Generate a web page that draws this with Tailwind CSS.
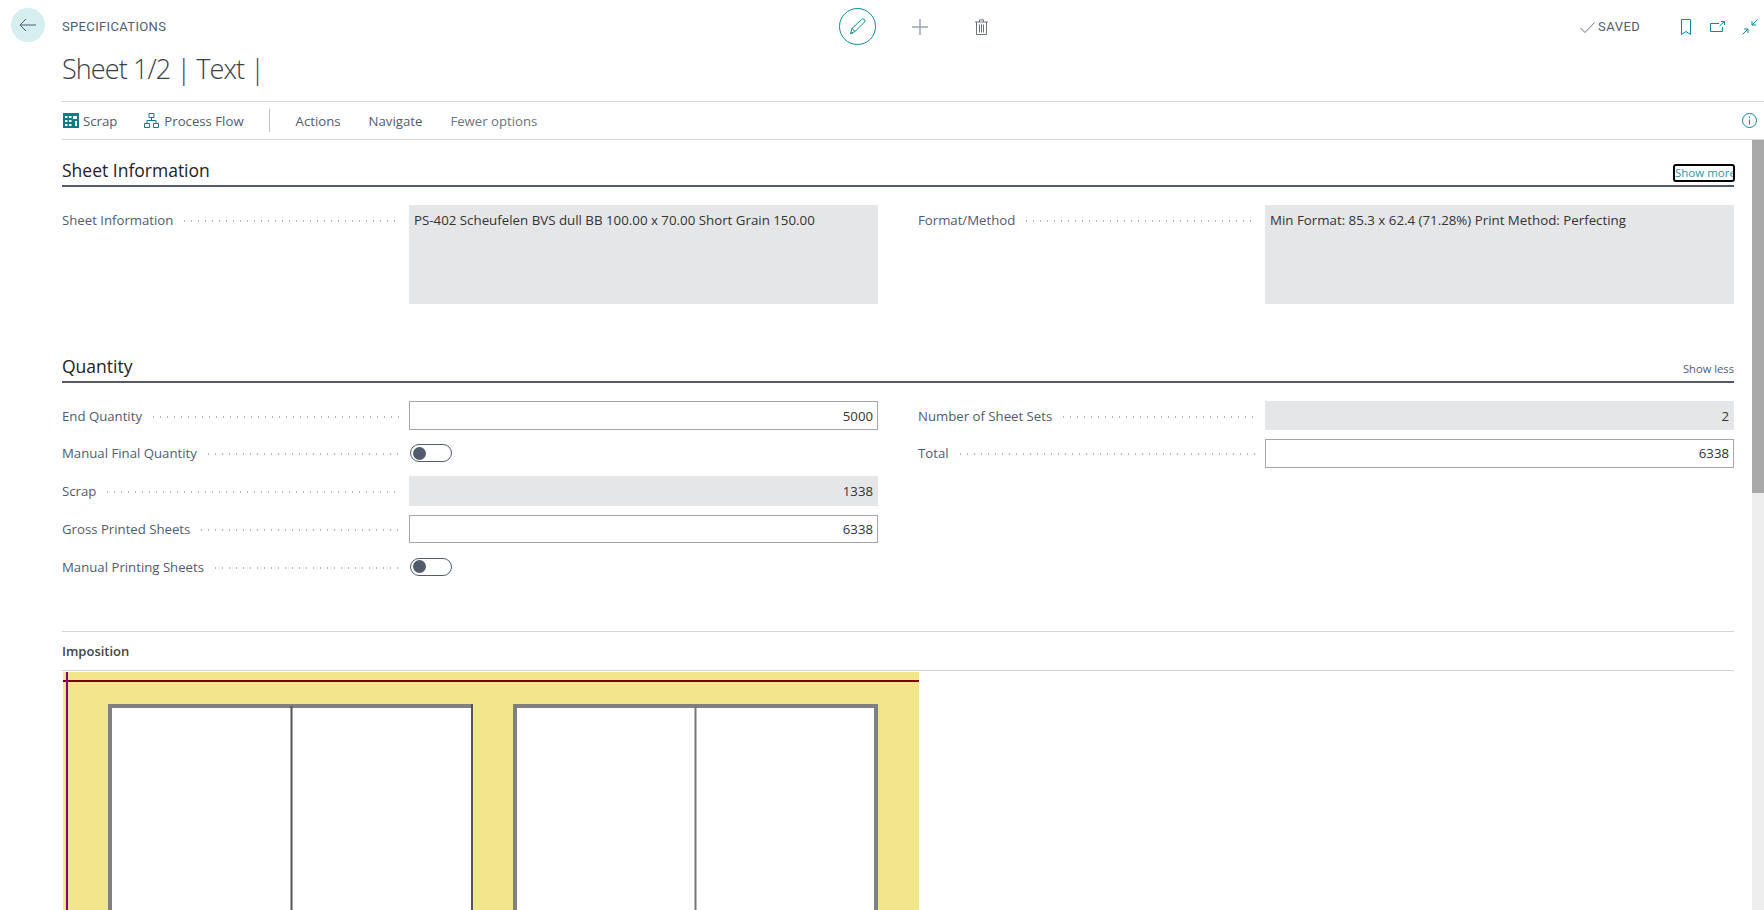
<!DOCTYPE html>
<html lang="en">
<head>
  <meta charset="UTF-8">
  <meta name="viewport" content="width=device-width, initial-scale=1.0">
  <script src="https://cdn.jsdelivr.net/npm/@tailwindcss/browser@4"></script>
  <title>Specifications</title>
</head>
<body class="relative h-[910px] overflow-hidden bg-white font-['Open_Sans',sans-serif] text-[13.2px] text-[#505c6d]">

  <!-- Header -->
  <header class="h-[101px]">
    <div class="flex h-[53px] items-start pt-2">
      <button class="ml-[11px] flex h-[34px] w-[34px] items-center justify-center rounded-full bg-[#d5eef0]">
        <svg width="18" height="14" viewBox="0 0 18 14" fill="none" stroke="#505c6d"><path d="M17 7H1M7 1 1 7l6 6"/></svg>
      </button>
      <div class="ml-[17px] w-[777px] pt-[11px] font-['Roboto',sans-serif] text-[13px] leading-4 tracking-[0.35px]">SPECIFICATIONS</div>
      <button class="flex h-[37px] w-[37px] items-center justify-center rounded-full border border-[#0a8a94]">
        <svg width="17" height="17" viewBox="0 0 17 17" fill="none" stroke="#0a8a94"><path d="M1.5 15.5 3 10.5 12.5 1.5a1.6 1.6 0 0 1 3 2.5L6 13.5zM3 10.5 6 13.5M1.5 15.5 4 15"/></svg>
      </button>
      <svg class="ml-[36px] mt-[11px]" width="16" height="16" viewBox="0 0 16 16" stroke="#9ca3af" stroke-width="1.5"><path d="M8 0v16M0 8h16"/></svg>
      <svg class="ml-[47px] mt-[11px]" width="13" height="16" viewBox="0 0 13 16" fill="none" stroke="#6b7280"><path d="M0 3h13M4.5 3V.8h4V3M1.5 3v12.5h10V3M4.5 5.5v8M6.5 5.5v8M8.5 5.5v8"/></svg>
      <div class="ml-[592px] mt-[11px] flex items-center">
        <svg width="15" height="11" viewBox="0 0 15 11" fill="none" stroke="#6b7280"><path d="M.5 6 5 10.5 14.5.5"/></svg>
        <span class="ml-[3px] font-['Roboto',sans-serif] text-[13px] leading-4 tracking-[0.5px]">SAVED</span>
      </div>
      <svg class="ml-[41px] mt-[11px]" width="10" height="16" viewBox="0 0 10 16" fill="none" stroke="#0a8a94"><path d="M.5.5h9v15L5 12.5.5 15.5z"/></svg>
      <svg class="ml-[19px] mt-[13px]" width="15" height="11" viewBox="0 0 15 11" fill="none" stroke="#0a8a94"><path d="M9 2.5H.5v8h12V6M9.5 5 14.5.5M11 .5h3.5V4"/></svg>
      <svg class="ml-[17px] mt-[11px]" width="16" height="16" viewBox="0 0 16 16" fill="none" stroke="#0a8a94"><path d="M15.5.5 10 6M10 2v4h4M.5 15.5 6 10M2 10h4v4"/></svg>
    </div>
    <h1 class="ml-[62px] pt-[1px] font-['Open_Sans',sans-serif] text-[27px] leading-[30px] font-light tracking-[-0.9px] text-[#3a3f47]">Sheet 1/2 | Text |</h1>
  </header>

  <!-- Action bar -->
  <nav class="ml-[62px] flex h-[39px] items-center border-y border-[#d4d4d4] pt-[2px]">
    <svg class="ml-[1px] -mt-[2px]" width="16" height="15" viewBox="0 0 16 15">
      <rect width="16" height="15" fill="#0a7d87"/>
      <g fill="#fff"><rect x="2" y="3" width="2.5" height="2"/><rect x="6" y="3" width="2.5" height="2"/><rect x="2" y="7" width="2.5" height="2"/><rect x="6" y="7" width="2.5" height="2"/><rect x="2" y="11" width="2.5" height="2"/><rect x="6" y="11" width="2.5" height="2"/><rect x="10" y="3" width="4" height="3"/><rect x="12" y="8" width="2" height="5"/></g>
    </svg>
    <span class="ml-[4px]">Scrap</span>
    <svg class="ml-[27px] -mt-[2px]" width="15" height="15" viewBox="0 0 15 15" fill="none" stroke="#0a7d87"><path d="M5 .5h5v4H5zM.5 10.5h5v4h-5zM9.5 10.5h5v4h-5zM7.5 4.5v3M3 10.5v-3h9v3"/></svg>
    <span class="ml-[5px]">Process Flow</span>
    <div class="ml-[25px] -mt-[2px] h-[23px] w-px bg-[#b8bec6]"></div>
    <span class="ml-[26px]">Actions</span>
    <span class="ml-[28px]">Navigate</span>
    <span class="ml-[28px] text-[#6b7280]">Fewer options</span>
    <svg class="ml-auto mr-[7px] -mt-[2px]" width="15" height="15" viewBox="0 0 15 15" fill="none" stroke="#0a8a94"><circle cx="7.5" cy="7.5" r="7"/><path d="M7.5 6.5v5M7.5 3.5v1.5"/></svg>
  </nav>

  <main class="pl-[62px] pr-[30px]">
    <!-- Sheet Information -->
    <section>
      <div class="flex h-[47px] items-end justify-between border-b-2 border-[#505c6d] pb-[3px]">
        <h2 class="text-[17.5px] leading-6 font-medium text-[#222]">Sheet Information</h2>
        <a href="#" class="-mr-[1px] w-[62px] overflow-hidden rounded-[3px] border-2 border-black text-[11.5px] leading-[14px] whitespace-nowrap text-[#2a9aa4]">Show more</a>
      </div>
      <div class="grid grid-cols-2 gap-x-[40px] pt-[18px]">
        <div class="flex">
          <div class="flex h-[31px] w-[347px] items-center pr-[8px]">
            <span>Sheet Information</span>
            <span class="ml-2 h-[2px] flex-1 bg-[radial-gradient(circle,#b3b8bf_1px,transparent_1px)] bg-[length:7px_2px]"></span>
          </div>
          <div class="h-[99px] flex-1 bg-[#e5e6e8] px-[5px] pt-[3px] text-[13.3px] leading-[24px] text-[#333]">PS-402 Scheufelen BVS dull BB 100.00 x 70.00 Short Grain 150.00</div>
        </div>
        <div class="flex">
          <div class="flex h-[31px] w-[347px] items-center pr-[8px]">
            <span>Format/Method</span>
            <span class="ml-2 h-[2px] flex-1 bg-[radial-gradient(circle,#b3b8bf_1px,transparent_1px)] bg-[length:7px_2px]"></span>
          </div>
          <div class="h-[99px] flex-1 bg-[#e5e6e8] px-[5px] pt-[3px] text-[13.3px] leading-[24px] text-[#333]">Min Format: 85.3 x 62.4 (71.28%) Print Method: Perfecting</div>
        </div>
      </div>
    </section>

    <!-- Quantity -->
    <section class="mt-[34px]">
      <div class="flex h-[45px] items-end justify-between border-b-2 border-[#505c6d] pb-[3px]">
        <h2 class="text-[17.5px] leading-6 font-medium text-[#222]">Quantity</h2>
        <a href="#" class="mb-[1px] text-[11.2px] leading-[16px]">Show less</a>
      </div>
      <div class="grid grid-cols-2 gap-x-[40px] pt-[13.75px]">
        <div>
          <div class="flex h-[37.75px] items-center">
            <div class="flex w-[347px] items-center pt-[2px] pr-[8px]"><span>End Quantity</span><span class="ml-2 h-[2px] flex-1 bg-[radial-gradient(circle,#b3b8bf_1px,transparent_1px)] bg-[length:7px_2px]"></span></div>
            <div class="flex h-[28.5px] flex-1 items-center justify-end border border-[#a6a6a6] px-[4px] pt-[2px] text-[#333]">5000</div>
          </div>
          <div class="flex h-[37.75px] items-center">
            <div class="flex w-[347px] items-center pt-[2px] pr-[8px]"><span>Manual Final Quantity</span><span class="ml-2 h-[2px] flex-1 bg-[radial-gradient(circle,#b3b8bf_1px,transparent_1px)] bg-[length:7px_2px]"></span></div>
            <div class="ml-[1px] flex h-[18px] w-[42px] items-center rounded-full border border-[#505c6d] pl-[2px]"><span class="h-[13px] w-[13px] rounded-full bg-[#505c6d]"></span></div>
          </div>
          <div class="flex h-[37.75px] items-center">
            <div class="flex w-[347px] items-center pt-[2px] pr-[8px]"><span>Scrap</span><span class="ml-2 h-[2px] flex-1 bg-[radial-gradient(circle,#b3b8bf_1px,transparent_1px)] bg-[length:7px_2px]"></span></div>
            <div class="flex h-[29.5px] flex-1 items-center justify-end bg-[#e5e6e8] px-[5px] pt-[2px] text-[#333]">1338</div>
          </div>
          <div class="flex h-[37.75px] items-center">
            <div class="flex w-[347px] items-center pt-[2px] pr-[8px]"><span>Gross Printed Sheets</span><span class="ml-2 h-[2px] flex-1 bg-[radial-gradient(circle,#b3b8bf_1px,transparent_1px)] bg-[length:7px_2px]"></span></div>
            <div class="flex h-[28.5px] flex-1 items-center justify-end border border-[#a6a6a6] px-[4px] pt-[2px] text-[#333]">6338</div>
          </div>
          <div class="flex h-[37.75px] items-center">
            <div class="flex w-[347px] items-center pt-[2px] pr-[8px]"><span>Manual Printing Sheets</span><span class="ml-2 h-[2px] flex-1 bg-[radial-gradient(circle,#b3b8bf_1px,transparent_1px)] bg-[length:7px_2px]"></span></div>
            <div class="ml-[1px] flex h-[18px] w-[42px] items-center rounded-full border border-[#505c6d] pl-[2px]"><span class="h-[13px] w-[13px] rounded-full bg-[#505c6d]"></span></div>
          </div>
        </div>
        <div>
          <div class="flex h-[37.75px] items-center">
            <div class="flex w-[347px] items-center pt-[2px] pr-[8px]"><span>Number of Sheet Sets</span><span class="ml-2 h-[2px] flex-1 bg-[radial-gradient(circle,#b3b8bf_1px,transparent_1px)] bg-[length:7px_2px]"></span></div>
            <div class="flex h-[29.5px] flex-1 items-center justify-end bg-[#e5e6e8] px-[5px] pt-[2px] text-[#333]">2</div>
          </div>
          <div class="flex h-[37.75px] items-center">
            <div class="flex w-[347px] items-center pt-[2px] pr-[8px]"><span>Total</span><span class="ml-2 h-[2px] flex-1 bg-[radial-gradient(circle,#b3b8bf_1px,transparent_1px)] bg-[length:7px_2px]"></span></div>
            <div class="flex h-[28.5px] flex-1 items-center justify-end border border-[#a6a6a6] px-[4px] pt-[2px] text-[#333]">6338</div>
          </div>
        </div>
      </div>
    </section>

    <!-- Imposition -->
    <section class="mt-[45.25px]">
      <div class="flex h-[40px] items-center border-y border-[#d4d4d4] pt-[2px] text-[13px] font-semibold text-[#444]">Imposition</div>
      <svg class="ml-[1px] mt-[1px]" width="856" height="238" viewBox="0 0 856 238">
        <rect width="856" height="238" fill="#f0e68c"/>
        <rect y="8" width="856" height="2" fill="#800000"/>
        <rect x="3" width="2" height="238" fill="#800080"/>
        <rect x="45" y="32" width="365" height="206" fill="#808080"/>
        <rect x="49" y="36" width="359" height="202" fill="#fff"/>
        <rect x="408" y="32" width="2" height="206" fill="#555"/>
        <rect x="227.5" y="34" width="2" height="204" fill="#555"/>
        <rect x="450" y="32" width="365" height="206" fill="#808080"/>
        <rect x="454" y="36" width="357" height="202" fill="#fff"/>
        <rect x="631.5" y="34" width="2" height="204" fill="#777"/>
      </svg>
    </section>
  </main>

  <!-- Scrollbar -->
  <div class="absolute top-[140px] right-0 bottom-0 w-[12px] bg-[#eee]">
    <div class="h-[353px] bg-[#a8a8a8]"></div>
  </div>
</body>
</html>
